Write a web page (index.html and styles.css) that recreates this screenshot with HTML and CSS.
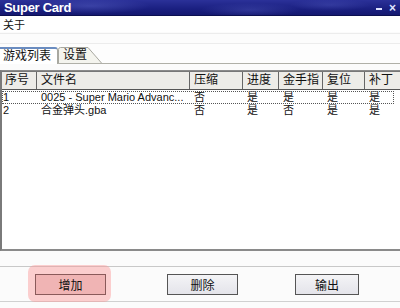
FILE: index.html
```html
<!DOCTYPE html>
<html lang="zh-Hans">
<head>
  <meta charset="UTF-8">
  <title>Super Card</title>
  <link rel="stylesheet" href="styles.css">
</head>
<body>
  <div class="window">
    <div class="titlebar">
      <span class="title">Super Card</span>
      <span class="ctrl">
        <span class="min"></span>
        <span class="close">×</span>
      </span>
    </div>
    <div class="menu"><span>关于</span></div>
    <div class="toolbar"></div>

    <div class="tabs">
      <div class="tab active">游戏列表</div>
      <div class="tab other">
        <svg class="tab-shape" width="44" height="16" viewBox="0 0 44 16">
          <path d="M0.5 16 V2.5 Q0.5 0.5 2.5 0.5 H30 L43.5 16" fill="#f4f4ee" stroke="#a8a8a0"/>
        </svg>
        <span>设置</span>
      </div>
    </div>

    <div class="list">
      <div class="row head">
        <div>序号</div>
        <div>文件名</div>
        <div>压缩</div>
        <div>进度</div>
        <div>金手指</div>
        <div>复位</div>
        <div>补丁</div>
      </div>
      <div class="row focus">
        <div>1</div>
        <div>0025 - Super Mario Advanc...</div>
        <div>否</div>
        <div>是</div>
        <div>是</div>
        <div>是</div>
        <div>是</div>
      </div>
      <div class="row">
        <div>2</div>
        <div>合金弹头.gba</div>
        <div>否</div>
        <div>是</div>
        <div>否</div>
        <div>是</div>
        <div>是</div>
      </div>
    </div>

    <div class="actions">
      <div class="slot hot"><button class="btn">增加</button></div>
      <div class="slot"><button class="btn">删除</button></div>
      <div class="slot"><button class="btn">输出</button></div>
    </div>
  </div>
</body>
</html>
```

FILE: styles.css
```css
* {
  margin: 0;
  padding: 0;
  box-sizing: border-box;
}

body {
  width: 400px;
  height: 308px;
  overflow: hidden;
  background-color: #fbfbfb;
  font-family: "Liberation Sans", "Noto Sans CJK SC", sans-serif;
  font-size: 11px;
  color: #111;
}

.titlebar {
  height: 16px;
  display: flex;
  align-items: center;
  justify-content: space-between;
  padding: 0 4px;
  background:
    radial-gradient(ellipse 60px 8px at 90px 6px, rgba(90, 100, 200, 0.45), transparent),
    radial-gradient(ellipse 50px 7px at 250px 10px, rgba(90, 100, 200, 0.35), transparent),
    radial-gradient(ellipse 40px 6px at 330px 5px, rgba(90, 100, 200, 0.3), transparent),
    linear-gradient(#2b3199, #1a1f80 60%, #141870);
  border-bottom: 1px solid #0c0f50;
}

.title {
  color: #fff;
  font-weight: bold;
  font-size: 13px;
  letter-spacing: -0.3px;
}

.ctrl {
  display: flex;
  align-items: center;
  gap: 7px;
  color: #dfe3ff;
}

.min {
  width: 6px;
  height: 2px;
  background: #dfe3ff;
  margin-top: 2px;
}

.close {
  font-size: 12px;
  font-weight: bold;
  line-height: 1;
}

.menu {
  height: 16px;
  padding: 3px 3px 0;
  background: #fff;
  font-size: 11px;
  line-height: 13px;
}

.toolbar {
  height: 11px;
  background: #fcfcfc;
  border-top: 1px solid #ececec;
  border-bottom: 1px solid #ececec;
  margin-top: 1px;
}

.tabs {
  display: flex;
  align-items: flex-end;
  height: 20px;
  border-bottom: 1px solid #b0b0a8;
  background: #fdfdfd;
}

.tab {
  height: 16px;
  font-size: 12px;
  line-height: 16px;
}

.tab.active {
  width: 58px;
  padding-left: 3px;
  background: #fff;
  border-top: 2px solid #6a8cc0;
  border-right: 1px solid #a8a8a0;
  border-top-right-radius: 3px;
  height: 17px;
  margin-bottom: -1px;
  line-height: 14px;
}

.tab.other {
  position: relative;
  width: 44px;
  padding-left: 5px;
}

.tab-shape {
  position: absolute;
  left: 0;
  top: 0;
}

.tab.other span {
  position: relative;
}

.list {
  margin-top: 6px;
  height: 181px;
  background: #fff;
  border-left: 2px solid #7a7a7a;
  border-top: 1px solid #8a8a8a;
  border-bottom: 2px solid #8a8a8a;
}

.row {
  display: grid;
  grid-template-columns: 35px 153px 53px 36px 44px 42px 1fr;
  height: 13px;
  line-height: 13px;
}

.row div {
  padding-left: 4px;
  white-space: nowrap;
  overflow: hidden;
}

.row div:first-child {
  padding-left: 1px;
}

.row.head {
  height: 19px;
  line-height: 17px;
  background: #edece8;
  border-top: 1px solid #777;
  border-bottom: 1px solid #555;
  font-size: 12px;
}

.row.head div {
  border-right: 1px solid #666;
  padding-left: 4px;
}

.row.head div:first-child {
  padding-left: 3px;
}

.row.head div:last-child {
  border-right: none;
}

.row.focus {
  margin-top: 1px;
  outline: 1px dotted #555;
  outline-offset: -1px;
  width: 392px;
}

.actions {
  margin-top: 15px;
  height: 36px;
  border-top: 1px solid #c8c8c8;
  border-bottom: 1px solid #d0d0d0;
  display: grid;
  grid-template-columns: 139px 127px 1fr;
  align-items: center;
}

.slot {
  display: flex;
  align-items: center;
}

.slot:first-child {
  padding-left: 35px;
}

.slot:nth-child(2) {
  padding-left: 28px;
}

.slot:nth-child(3) {
  padding-left: 29px;
}

.btn {
  width: 71px;
  height: 21px;
  border: 1px solid #555;
  background: linear-gradient(#f4f4f6, #e4e4ea);
  font-family: "Liberation Sans", "Noto Sans CJK SC", sans-serif;
  font-size: 12px;
  color: #111;
}

.slot:nth-child(3) .btn {
  width: 64px;
}

.slot.hot {
  position: relative;
}

.slot.hot::before {
  content: "";
  position: absolute;
  left: 28px;
  top: -9px;
  width: 83px;
  height: 37px;
  border-radius: 7px;
  background: rgba(250, 150, 150, 0.45);
}

.slot.hot .btn {
  position: relative;
  background: #f0b4b4;
  border-color: #8a5a5a;
}
```
